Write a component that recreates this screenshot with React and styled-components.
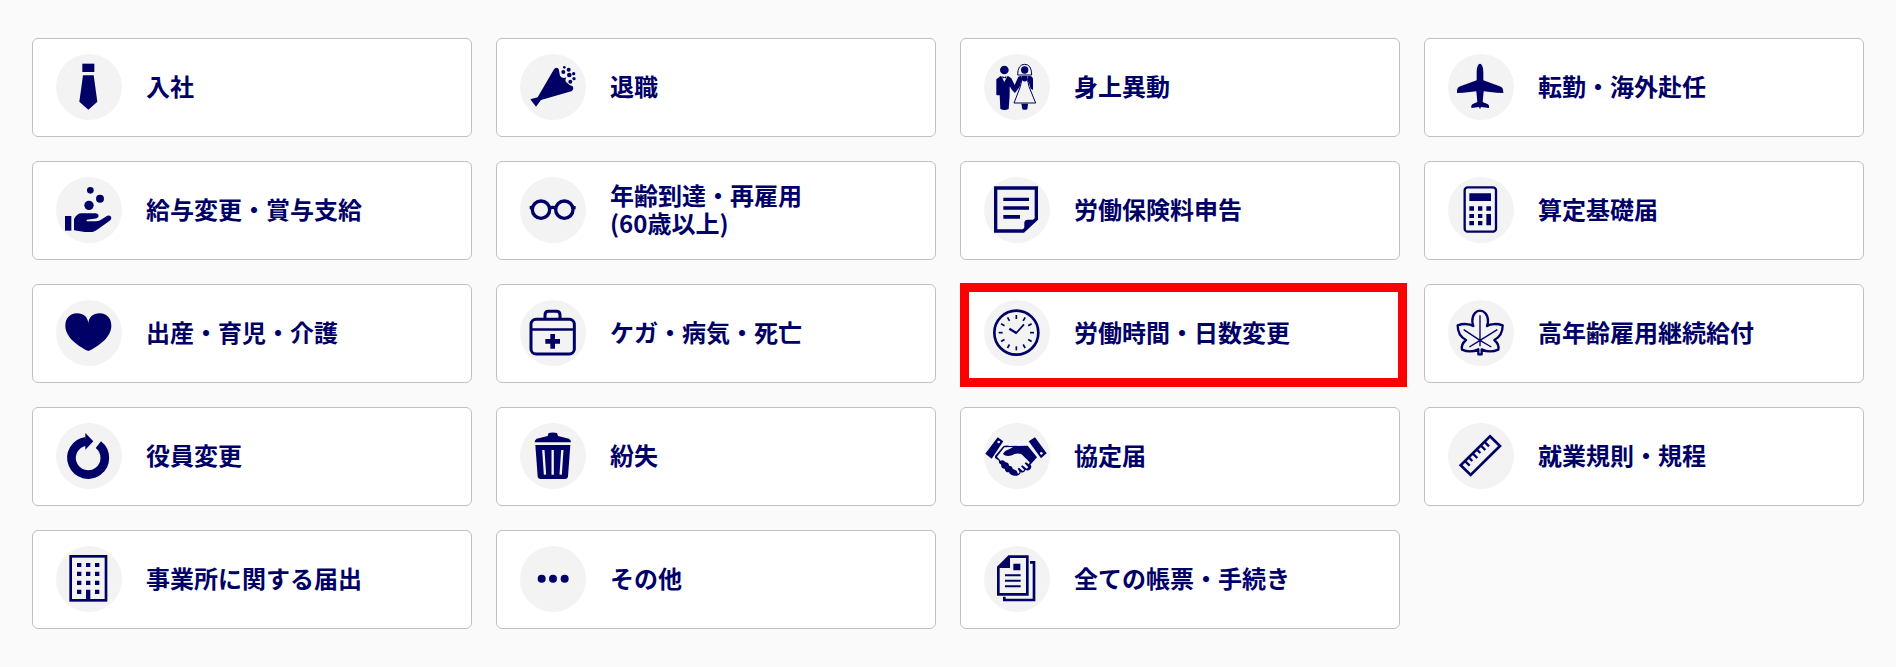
import React from 'react'
import styled, { createGlobalStyle } from 'styled-components'

const procedures = [
    { icon: 'tie', label: '入社' },
    { icon: 'cracker', label: '退職' },
    { icon: 'couple', label: '身上異動' },
    { icon: 'plane', label: '転勤・海外赴任' },
    { icon: 'hand', label: '給与変更・賞与支給' },
    { icon: 'glasses', label: '年齢到達・再雇用', sub: '(60歳以上)' },
    { icon: 'note', label: '労働保険料申告' },
    { icon: 'calculator', label: '算定基礎届' },
    { icon: 'heart', label: '出産・育児・介護' },
    { icon: 'firstAid', label: 'ケガ・病気・死亡' },
    { icon: 'clock', label: '労働時間・日数変更', marked: true },
    { icon: 'leaf', label: '高年齢雇用継続給付' },
    { icon: 'refresh', label: '役員変更' },
    { icon: 'trash', label: '紛失' },
    { icon: 'handshake', label: '協定届' },
    { icon: 'ruler', label: '就業規則・規程' },
    { icon: 'building', label: '事業所に関する届出' },
    { icon: 'dots', label: 'その他' },
    { icon: 'documents', label: '全ての帳票・手続き' },
]

const clockTicks = [0, 30, 60, 90, 120, 150, 180, 210, 240, 270, 300, 330]

const icons = {
    tie: (
        <>
            <rect x="79" y="29" width="36" height="25" />
            <path d="M81 64H113L124 143L97 167L70 143Z" />
        </>
    ),
    cracker: (
        <>
            <path d="M31 136L53 130L101 47Q108 36 116 45L120 65Q128 76 139 70Q132 83 143 88Q149 96 158 97Q163 106 154 112L63 138L48 158Z" />
            <circle cx="133" cy="40" r="4" />
            <circle cx="146" cy="47" r="6" />
            <circle cx="130" cy="54" r="6" />
            <circle cx="148" cy="63" r="7" />
            <circle cx="161" cy="59" r="5" />
            <circle cx="162" cy="74" r="5" />
            <circle cx="151" cy="83" r="6" />
        </>
    ),
    couple: (
        <>
            <circle cx="61" cy="48" r="13" />
            <path d="M55 66L61 70L67 66V74L61 71L55 74Z" />
            <path d="M51 65L61 84L71 65L82 73L92 93L103 68L110 66H136Q146 66 147 76V108L140 104L134 84H111L107 98L93 117L84 108L77 97V124L74 165Q61 171 49 165L47 124H39Q36 122 37 118V76Z" />
            <circle cx="122" cy="48" r="11" />
            <g fill="none" stroke="#000066" strokeWidth="3">
                <path d="M101 63Q101 31 122 31Q143 31 143 63Z" />
                <path d="M111 66L113 79L109 98L90 147H155L135 98L131 79L133 66" fill="#f3f3f3" />
            </g>
            <path d="M114 66H130V79Q122 86 114 79Z" />
            <path d="M112 149H132L130 166Q122 169 115 166Z" />
        </>
    ),
    plane: (
        <path d="M96 29C102 29 106 40 106 56V79L155 97C163 100 166 104 166 117L146 116L107 112L104 144L120 151Q125 155 123 162L99 159L96 166L93 159L70 162Q68 155 73 151L88 144L85 112L46 116L27 117C27 104 29 100 37 97L86 79V56C86 40 90 29 96 29Z" />
    ),
    hand: (
        <>
            <circle cx="103" cy="40" r="10" />
            <circle cx="132" cy="65" r="12" />
            <circle cx="99" cy="85" r="14" />
            <rect x="27" y="117" width="19" height="44" />
            <path d="M54 126Q63 109 76 109H119Q130 111 127 120Q124 125 115 125L92 128V133H120Q130 133 137 127L154 116Q164 113 166 122Q166 127 160 132L121 160Q116 164 109 165H86L54 160Z" />
        </>
    ),
    glasses: (
        <g fill="none" stroke="#000066" strokeWidth="10">
            <circle cx="63" cy="98" r="26" />
            <circle cx="133" cy="98" r="26" />
            <path d="M88 93Q98 89 108 93M29 92H38M158 92H167" />
        </g>
    ),
    note: (
        <>
            <path d="M35 33H157V126L118 162H35Z" fill="none" stroke="#000066" strokeWidth="10" />
            <path d="M121 162V138Q121 128 132 128H157Z" />
            <path d="M58 62H135V72H58ZM58 88H135V98H58ZM58 114H108V125H58Z" />
        </>
    ),
    calculator: (
        <>
            <rect x="50" y="31" width="94" height="133" rx="9" fill="none" stroke="#000066" strokeWidth="7" />
            <path d="M64 49H129V72H64ZM64 88H78V101H64ZM90 88H103V101H90ZM115 88H129V101H115ZM64 111H78V123H64ZM90 111H103V123H90ZM64 132H78V145H64ZM90 132H103V145H90ZM115 111H129V145H115Z" />
        </>
    ),
    heart: (
        <path d="M97 72C97 52 112 40 131 40C154 40 166 57 166 77C166 112 127 139 97 153C67 139 28 112 28 77C28 57 40 40 63 40C82 40 97 52 97 72Z" />
    ),
    firstAid: (
        <>
            <g fill="none" stroke="#000066" strokeWidth="9">
                <rect x="33" y="58" width="130" height="104" rx="15" />
                <path d="M75 57V45Q75 34 86 34H109Q120 34 120 45V57" />
            </g>
            <path d="M33 85H163V92H33Z" />
            <path d="M91 102H105V117H120V131H105V146H91V131H76V117H91Z" />
        </>
    ),
    clock: (
        <g fill="none" stroke="#000066">
            <circle cx="97" cy="98" r="66" strokeWidth="8" />
            {clockTicks.map((angle) => (
                <path key={angle} d="M97 45V57" strokeWidth="5" transform={`rotate(${angle} 97 98)`} />
            ))}
            <path d="M76 86L97 99" strokeWidth="7" />
            <path d="M95 101L120 73" strokeWidth="5" />
        </g>
    ),
    leaf: (
        <g fill="none" stroke="#000066" strokeLinejoin="round">
            <path
                d="M96 32C85 32 73 42 73 63Q73 71 76 78C64 70 43 71 29 76C29 96 38 112 54 120C46 127 39 138 42 149C60 157 77 155 91 148V163H101V148C115 155 132 157 151 149C154 138 147 127 139 120C155 112 164 96 164 76C150 71 128 70 117 78Q120 71 120 63C120 42 107 32 96 32Z"
                strokeWidth="7"
            />
            <path d="M96 46V139M47 89L96 121L148 89M64 141L96 121L130 141" strokeWidth="4" />
        </g>
    ),
    refresh: (
        <>
            <path d="M127 65A50 50 0 1 1 90 55" fill="none" stroke="#000066" strokeWidth="26" />
            <path d="M88 30L112 55L88 80Z" />
        </>
    ),
    trash: (
        <>
            <path d="M86 30Q98 27 111 30L114 39L147 47Q153 50 153 58H44Q44 50 50 47L83 39Z" />
            <path d="M46 66H151L144 160Q143 168 135 168H62Q54 168 53 160Z" />
            <path d="M70 81L75 155M98 81V155M127 81L122 155" stroke="#f3f3f3" strokeWidth="7" />
        </>
    ),
    handshake: (
        <>
            <path d="M41 43L58 55L23 107L4 92Z" />
            <path d="M153 43L134 55L171 106L188 91Z" />
            <path d="M58 70Q66 65 78 69L131 68L159 103L139 125Q146 132 137 140Q132 144 124 141Q121 151 110 148Q107 160 91 158Q78 157 75 148Q64 149 62 137Q50 136 52 125Q43 122 45 113L33 105V99Z" />
            <path
                d="M61 73L39 101L50 113Q60 109 64 118Q74 118 75 128Q85 128 86 137L98 143L102 153L107 148L101 137L105 134L116 144L121 141L111 130L115 127L128 137L133 133L122 121L126 118L135 124L137 118L112 93Q94 89 84 97Q65 102 57 93Q61 83 77 78L87 72Z"
                fill="#f3f3f3"
            />
            <circle cx="44" cy="57" r="4" fill="#f3f3f3" />
            <circle cx="172" cy="91" r="4" fill="#f3f3f3" />
        </>
    ),
    ruler: (
        <g fill="none" stroke="#000066">
            <path d="M126 40L156 69L68 156L38 127Z" strokeWidth="8" />
            <path d="M51 114L65 128M62 103L73 114M74 91L88 105M86 79L97 90M98 67L112 81M109 56L123 70" strokeWidth="7" />
        </g>
    ),
    building: (
        <>
            <rect x="44" y="31" width="106" height="132" fill="none" stroke="#000066" strokeWidth="8" />
            <path d="M63 51H76V63H63ZM90 51H103V63H90ZM117 51H130V63H117ZM63 77H76V90H63ZM90 77H103V90H90ZM117 77H130V90H117ZM63 104H76V117H63ZM90 104H103V117H90ZM117 104H130V117H117ZM63 131H76V144H63ZM117 131H130V144H117ZM90 131H103V162H90Z" />
        </>
    ),
    dots: (
        <>
            <circle cx="65" cy="98" r="12" />
            <circle cx="99" cy="98" r="12" />
            <circle cx="134" cy="98" r="12" />
        </>
    ),
    documents: (
        <>
            <g fill="none" stroke="#000066" strokeWidth="8">
                <path d="M75 32H130V145H43V64Z" />
                <path d="M138 49H150V162H61V152" />
            </g>
            <path d="M40 66L78 29V66ZM88 53H109V73H88Z" />
            <path d="M63 85H110V91H63ZM63 101H110V107H63ZM63 118H110V124H63Z" />
        </>
    ),
}

function App() {
    return (
        <>
            <GlobalStyle />
            <Menu>
                <CardList>
                    {procedures.map(({ icon, label, sub, marked }) => (
                        <li key={icon}>
                            <Card href="#" $marked={marked}>
                                <IconCircle>
                                    <svg viewBox="0 0 198 198" aria-hidden="true">
                                        {icons[icon]}
                                    </svg>
                                </IconCircle>
                                <Label>
                                    {label}
                                    {sub && <br />}
                                    {sub}
                                </Label>
                            </Card>
                        </li>
                    ))}
                </CardList>
            </Menu>
        </>
    )
}

export default App

const GlobalStyle = createGlobalStyle`
    * {
        box-sizing: border-box;
    }

    body {
        margin: 0;
        background: #fafafa;
        font-family: "Noto Sans CJK JP", sans-serif;
    }
`

const Menu = styled.nav`
    padding: 38px 32px;
`

const CardList = styled.ul`
    display: grid;
    grid-template-columns: repeat(4, 1fr);
    gap: 24px;
    margin: 0;
    padding: 0;
    list-style: none;
`

const Card = styled.a`
    position: relative;
    display: flex;
    align-items: center;
    gap: 24px;
    padding: 15px 23px 16px;
    border: 1px solid #c0c0c0;
    border-radius: 6px;
    background: #fff;
    color: #000066;
    text-decoration: none;

    &:hover {
        background: #f7f7fc;
    }

    &::after {
        content: "";
        display: ${(props) => (props.$marked ? 'block' : 'none')};
        position: absolute;
        top: -2px;
        right: -8px;
        bottom: -5px;
        left: -1px;
        border: 9px solid #ff0000;
        pointer-events: none;
    }
`

const IconCircle = styled.span`
    flex: none;
    width: 66px;
    height: 66px;
    border-radius: 50%;
    background: #f3f3f3;

    svg {
        display: block;
        width: 100%;
        height: 100%;
        fill: #000066;
    }
`

const Label = styled.span`
    padding-bottom: 3px;
    font-size: 24px;
    font-weight: 700;
    line-height: 28px;
`
